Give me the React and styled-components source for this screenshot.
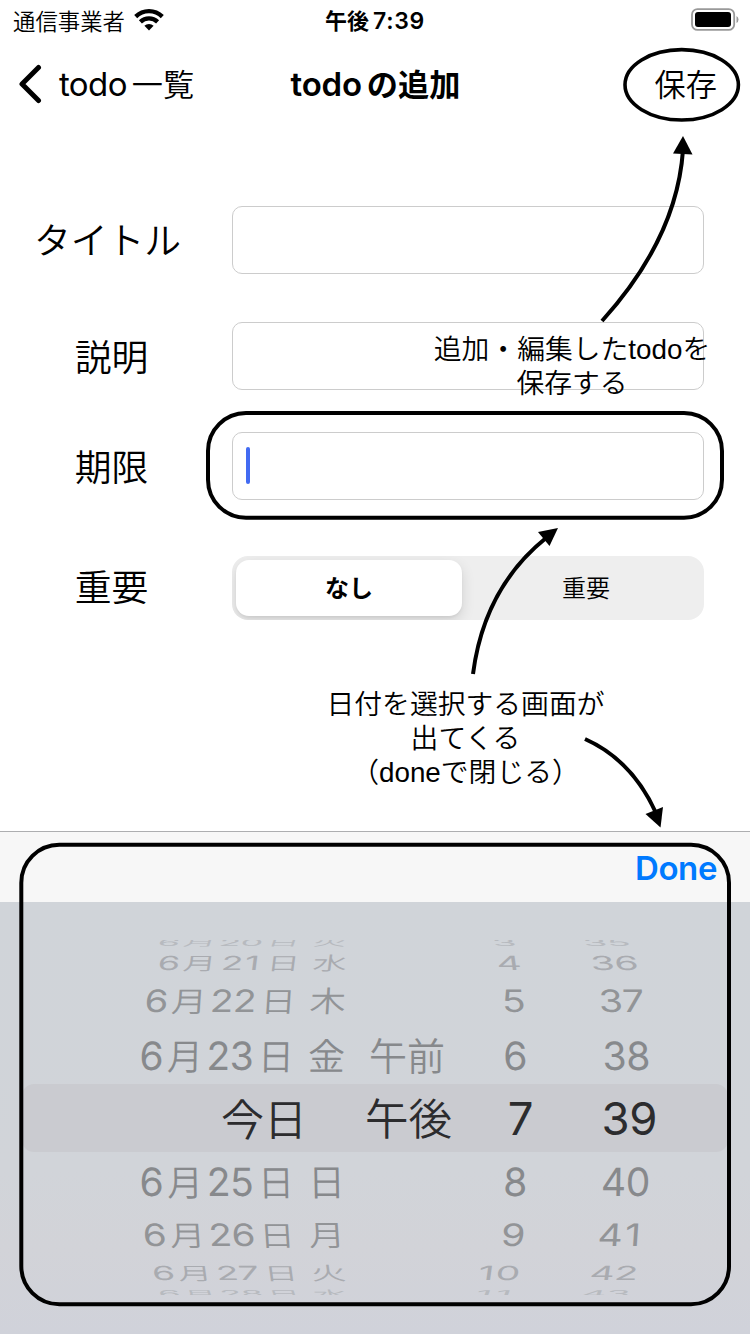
import React from "react";
import styled, { createGlobalStyle } from "styled-components";

const GlobalStyle = createGlobalStyle`
  * { box-sizing: border-box; }
  body {
    margin: 0;
    background: #fff;
    color: #000;
    font-family: Inter, "Noto Sans CJK JP", sans-serif;
  }
`;

const Screen = styled.main`
  position: relative;
  display: flex;
  flex-direction: column;
  width: 750px;
  height: 1334px;
  overflow: hidden;
  white-space: nowrap;
`;

const StatusBar = styled.header`
  display: grid;
  grid-template-columns: 1fr auto 1fr;
  align-items: center;
  height: 40px;
  padding: 0 11px 0 13px;
`;

const Carrier = styled.div`
  display: flex;
  align-items: center;
  gap: 9px;
  margin-bottom: 1px;
  font-size: 22.4px;
  font-weight: 350;
`;

const Clock = styled.div`
  display: flex;
  align-items: center;
  gap: 4px;
  margin: 0 2px 2px 0;
  font-size: 22px;
  font-weight: 600;
`;

const ClockDigits = styled.span`
  margin-top: 3px;
  font-size: 23px;
  letter-spacing: 0.7px;
`;

const Battery = styled.svg`
  justify-self: end;
`;

const NavBar = styled.nav`
  display: grid;
  grid-template-columns: 1fr auto 1fr;
  align-items: center;
  height: 88px;
  padding: 0 33px 0 34px;
`;

const BackButton = styled.div`
  display: flex;
  align-items: center;
  gap: 16px;
  margin-left: -16px;
`;

const NavText = styled.span`
  display: inline-flex;
  align-items: center;
  gap: 5px;
  font-size: ${(p) => p.$size || 31}px;
  font-weight: ${(p) => p.$weight || 350};
  letter-spacing: ${(p) => p.$track || 0}px;
`;

const NavKanji = styled.span`
  margin-bottom: 3px;
  font-size: 31.2px;
  font-weight: ${(p) => p.$weight || 350};
  letter-spacing: 0;
  justify-self: ${(p) => p.$align || "auto"};
`;

const Form = styled.section`
  display: flex;
  flex-direction: column;
  height: 703px;
  padding: 78px 46px 0 0;
`;

const Field = styled.div`
  display: grid;
  grid-template-columns: 232px 1fr;
  align-items: center;
  height: 68px;
  margin-bottom: ${(p) => p.$gap}px;
`;

const Label = styled.label`
  padding: ${(p) => p.$drop || 0}px ${(p) => p.$inset || 9}px 0 0;
  text-align: center;
  font-size: 36.8px;
  font-weight: 350;
  line-height: 64px;
`;

const Input = styled.div`
  display: flex;
  align-items: center;
  height: 68px;
  padding-left: 13px;
  border: 1px solid #ccc;
  border-radius: 10px;
`;

const Caret = styled.span`
  width: 4px;
  height: 37px;
  margin-top: -2px;
  border-radius: 2px;
  background: #426bf2;
`;

const Segments = styled.div`
  display: grid;
  grid-template-columns: 226px 1fr;
  gap: 8px;
  height: 64px;
  padding: 4px 2px 4px 4px;
  border-radius: 16px;
  background: #eee;
  overflow: hidden;
`;

const Segment = styled.div`
  display: flex;
  align-items: center;
  justify-content: center;
  padding-bottom: 4px;
  border-radius: 13px;
  font-size: 24px;
  font-weight: ${(p) => (p.$active ? 600 : 350)};
  background: ${(p) => (p.$active ? "#fff" : "transparent")};
  box-shadow: ${(p) => (p.$active ? "0 5px 14px rgba(0,0,0,.12), 0 2px 3px rgba(0,0,0,.05)" : "none")};
`;

const Toolbar = styled.div`
  display: flex;
  align-items: center;
  justify-content: flex-end;
  height: 71px;
  padding: 2px 33px 0 0;
  border-top: 1px solid #adaeb0;
  background: #f7f7f7;
  color: #007aff;
  font-size: 33px;
  font-weight: 590;
  letter-spacing: -0.4px;
`;

const Picker = styled.section`
  display: flex;
  flex-direction: column;
  height: 432px;
  padding: 38px 22px 0;
  background: linear-gradient(#d0d4d9 0%, #d1d4d9 62%, #d2d3d8 80%, #d0d2da 100%);
`;

const Wheel = styled.div`
  display: grid;
  grid-template-columns: 324px 106px 75px 1fr;
  align-items: center;
  height: ${(p) => p.$h}px;
  padding-right: 78px;
  overflow: hidden;
  border-radius: ${(p) => (p.$selected ? 12 : 0)}px;
  background: ${(p) => (p.$selected ? "#cacbd0" : "transparent")};
  color: ${(p) => p.$color};
  font-weight: 390;
`;

const Cell = styled.div`
  display: flex;
  align-items: center;
  justify-content: flex-end;
  height: 0;
  font-size: ${(p) => (p.$selected ? 45.5 : 39)}px;
  transform: translate(${(p) => p.$x || 0}px, ${(p) => p.$y || 0}px)
    scale(${(p) => p.$sx || 1}, ${(p) => p.$sy || 1}) skewX(${(p) => p.$skew || 0}deg);
  transform-origin: 100% 50%;
`;

const Kanji = styled.span`
  width: ${(p) => (p.$w ? p.$w + "px" : "auto")};
  margin: 0 0 ${(p) => p.$lift || 3}px ${(p) => p.$lead || 0}px;
  text-align: center;
  font-size: ${(p) => p.$size || 36}px;
  font-weight: 350;
`;

const Digits = styled.span`
  width: ${(p) => (p.$w ? p.$w + "px" : "auto")};
  text-align: center;
  letter-spacing: ${(p) => p.$track || -0.4}px;
`;

const Annotations = styled.svg`
  position: absolute;
  inset: 0;
  pointer-events: none;
`;

const Note = styled.p`
  position: absolute;
  left: ${(p) => p.$x}px;
  top: ${(p) => p.$y}px;
  width: 300px;
  margin: 0;
  text-align: center;
  font: 350 27.8px/34px "Liberation Sans", "Noto Sans CJK JP", sans-serif;
`;

const rows = [
  { h: 9, day: "20", week: "火", hour: "3", min: "35", sx: 0.92, sy: 0.24, y: -3, skew: -5, x: 1, hx: -11, mx: -20, color: "#b7babf" },
  { h: 28, day: "21", week: "水", hour: "4", min: "36", sx: 0.92, sy: 0.5, y: -1, skew: -4, x: 1, hx: -6, mx: -12, color: "#a9abb0" },
  { h: 48, day: "22", week: "木", hour: "5", min: "37", sx: 0.98, sy: 0.79, y: -1, skew: -3, x: 0, hx: -2, mx: -6, color: "#929497" },
  { h: 59, day: "23", week: "金", half: "午前", hour: "6", min: "38", sx: 1, sy: 1, y: 0, skew: -1, x: -1, hx: 0, mx: 0, color: "#87898c" },
  { h: 68, today: "今日", half: "午後", hour: "7", min: "39", selected: true, color: "#2c2c2e", hx: 6, mx: 7, y: 0 },
  { h: 58, day: "25", week: "日", hour: "8", min: "40", sx: 1, sy: 1, y: 0, skew: 1, x: -1, hx: 0, mx: 0, color: "#87898c" },
  { h: 48, day: "26", week: "月", hour: "9", min: "41", sx: 0.985, sy: 0.79, y: 0, skew: 3, x: -1, hx: -2, mx: -6, track: 3, color: "#929497" },
  { h: 29, day: "27", week: "火", hour: "10", min: "42", sx: 0.945, sy: 0.5, y: -1, skew: 4, x: 0, hx: -5, mx: -12, track: 1.5, color: "#a9abb0" },
  { h: 8, day: "28", week: "水", hour: "11", min: "43", sx: 0.92, sy: 0.24, y: 2, skew: 5, x: 1, hx: -11, mx: -20, track: 4, color: "#b7babf" },
];

function WheelRow({ row }) {
  const shape = { $y: row.y, $sy: row.sy, $selected: row.selected };
  const lift = row.selected ? 3 : 3;
  return (
    <Wheel $h={row.h} $selected={row.selected} $color={row.color}>
      {row.today ? (
        <Cell $x={-39} $selected><Kanji $size={43} $lift={lift}>{row.today}</Kanji></Cell>
      ) : (
        <Cell {...shape} $x={row.x} $sx={row.sx} $skew={row.skew}>
          <Digits $w={29}>6</Digits>
          <Kanji $w={38}>月</Kanji>
          <Digits $w={52} $track={row.day === "21" ? 1.5 : -0.4}>{row.day}</Digits>
          <Kanji $w={40}>日</Kanji>
          <Kanji $w={37} $size={37} $lead={12}>{row.week}</Kanji>
        </Cell>
      )}
      <Cell {...shape} $x={row.selected ? 0 : -7}>
        {row.half && <Kanji $size={row.selected ? 43.5 : 38} $lift={lift}>{row.half}</Kanji>}
      </Cell>
      <Cell {...shape} $x={row.hx} $skew={-(row.skew || 0)}>
        <Digits $track={row.hour.length > 1 ? row.track : -0.4}>{row.hour}</Digits>
      </Cell>
      <Cell {...shape} $x={row.mx} $skew={-(row.skew || 0)}>
        <Digits $track={row.min === "41" ? row.track : -0.4}>{row.min}</Digits>
      </Cell>
    </Wheel>
  );
}

export default function App() {
  return (
    <Screen>
      <GlobalStyle />
      <StatusBar>
        <Carrier>
          通信事業者
          <svg width="30" height="22" viewBox="0 0 30 22">
            <g fill="none" stroke="#000" strokeWidth="4.3">
              <path d="M1.7 7.6 A19 19 0 0 1 28.3 7.6" />
              <path d="M6.4 12.9 A12.3 12.3 0 0 1 23.6 12.9" />
            </g>
            <path d="M15 21.5 L10.4 16.8 A6.5 6.5 0 0 1 19.6 16.8 Z" />
          </svg>
        </Carrier>
        <Clock>午後<ClockDigits>7:39</ClockDigits></Clock>
        <Battery width="48" height="24" viewBox="0 0 48 24">
          <rect x="1" y="1.1" width="42.2" height="20.8" rx="5.5" fill="none" stroke="#999" strokeWidth="1.8" />
          <rect x="4" y="4" width="36" height="15" rx="3" />
          <path d="M45.5 8 Q47.5 9 47.5 11.5 T45.5 15 Z" fill="#999" />
        </Battery>
      </StatusBar>
      <NavBar>
        <BackButton>
          <svg width="25" height="40" viewBox="0 0 25 40">
            <path d="M20.5 3.5 L4 20 L20.5 36.5" fill="none" stroke="#000" strokeWidth="5" strokeLinecap="round" strokeLinejoin="round" />
          </svg>
          <NavText $size={33} $weight={400} $track={-0.6}>todo<NavKanji>一覧</NavKanji></NavText>
        </BackButton>
        <NavText $size={33} $weight={600} $track={-0.2}>todo<NavKanji $weight={600}>の追加</NavKanji></NavText>
        <NavKanji $align="end">保存</NavKanji>
      </NavBar>
      <Form>
        <Field $gap={48}><Label $inset={17} $drop={2}>タイトル</Label><Input /></Field>
        <Field $gap={42}><Label $drop={3}>説明</Label><Input /></Field>
        <Field $gap={54}><Label $drop={3}>期限</Label><Input><Caret /></Input></Field>
        <Field $gap={0}>
          <Label>重要</Label>
          <Segments>
            <Segment $active>なし</Segment>
            <Segment>重要</Segment>
          </Segments>
        </Field>
      </Form>
      <Toolbar>Done</Toolbar>
      <Picker>
        {rows.map((row) => <WheelRow key={row.min} row={row} />)}
      </Picker>
      <Annotations width="750" height="1334" viewBox="0 0 750 1334">
        <g fill="none" stroke="#000" strokeWidth="4">
          <ellipse cx="681.7" cy="84.8" rx="56.7" ry="35.2" strokeWidth="3.6" />
          <rect x="208" y="413" width="514" height="104.7" rx="38" />
          <rect x="21.3" y="844.8" width="707.7" height="459.4" rx="38" />
          <path d="M602 321 Q677 238 683 150" />
          <path d="M473 674 Q484 588 546 538" />
          <path d="M585 739 Q632 760 656 813" />
        </g>
        <path d="M683 136 L692.5 154.5 L673 153.5 Z" />
        <path d="M558 528 L538 532 L549.5 546 Z" />
        <path d="M660.5 827.5 L645.5 814 L663 807 Z" />
      </Annotations>
      <Note $x={422} $y={333}>追加・編集したtodoを<br />保存する</Note>
      <Note $x={315.5} $y={687.5}>日付を選択する画面が<br />出てくる<br />（doneで閉じる）</Note>
    </Screen>
  );
}
